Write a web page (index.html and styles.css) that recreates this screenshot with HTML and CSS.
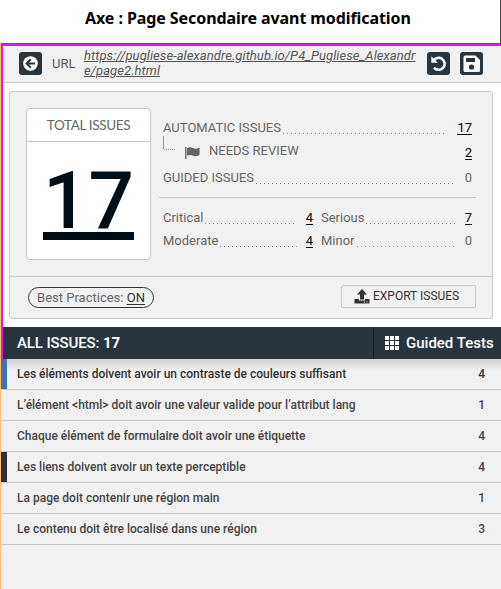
FILE: index.html
```
<!DOCTYPE html>
<html lang="fr">
<head>
<meta charset="utf-8">
<title>Axe : Page Secondaire avant modification</title>
<link rel="stylesheet" href="styles.css">
</head>
<body>
<h1 class="title"><span>Axe : Page Secondaire avant modification</span></h1>
<main class="panel">
  <section class="upper">
    <header class="urlbar">
      <span class="btn back"><svg width="23" height="23" viewBox="0 0 23 23"><circle cx="11.5" cy="11.5" r="7.3" fill="#fff"/><path d="M16 11.5H8M11.8 7.3L7.6 11.5L11.8 15.7" fill="none" stroke="#28353e" stroke-width="2"/></svg></span>
      <span class="label">URL</span>
      <a class="url">https://pugliese-alexandre.github.io/P4_Pugliese_Alexandre/page2.html</a>
      <span class="btn"><svg width="23" height="23" viewBox="0 0 23 23"><path d="M6.3 9.2A6 6 0 1 1 7 15.6" fill="none" stroke="#fff" stroke-width="2.5"/><path d="M4.3 4.3V10.8H10.8Z" fill="#fff"/></svg></span>
      <span class="btn save"><svg width="23" height="23" viewBox="0 0 23 23"><path fill="#fff" fill-rule="evenodd" d="M5 3.5H15.5L20 8V18.5Q20 20 18.5 20H5Q3.5 20 3.5 18.5V5Q3.5 3.5 5 3.5ZM6 6V10H15V6ZM11.5 12.4A2.6 2.6 0 1 0 11.5 17.6A2.6 2.6 0 1 0 11.5 12.4Z"/></svg></span>
    </header>
    <section class="summary">
      <div class="stats">
        <div class="total"><div class="total-head">TOTAL ISSUES</div><div class="total-num"><span>17</span></div></div>
        <div class="counts">
          <div class="line auto"><span>AUTOMATIC ISSUES</span><i></i><b>17</b></div>
          <div class="line review"><svg width="44" height="26" viewBox="0 0 44 26"><path d="M.5 0V13" stroke="#999" fill="none"/><path d="M1 13.5H13" stroke="#999" stroke-dasharray="1 1"/><path d="M22.8 11V23" stroke="#666" stroke-width="1.4"/><path d="M24 12.3Q27 10.5 30 12Q33 13.5 36.6 11.6V19Q33 21 30 19.7Q27 18.2 24 19.8Z" fill="#666"/></svg><span>NEEDS REVIEW</span><b>2</b></div>
          <div class="line guided"><span>GUIDED ISSUES</span><i></i><em>0</em></div>
          <div class="impacts">
            <div class="line"><span class="critical">Critical</span><i></i><b>4</b></div>
            <div class="line"><span>Serious</span><i></i><b>7</b></div>
            <div class="line"><span class="moderate">Moderate</span><i></i><b>4</b></div>
            <div class="line"><span>Minor</span><i></i><em>0</em></div>
          </div>
        </div>
      </div>
      <div class="actions">
        <span class="pill">Best Practices: <u>ON</u></span>
        <span class="export"><svg width="16" height="16" viewBox="0 0 16 16"><path fill="#333" fill-rule="evenodd" d="M8 0L13 5.5H10V10.5H6V5.5H3ZM.5 10H5V11.5H11V10H15.5V14.5H.5ZM10 12.5V13.5H11V12.5ZM12.5 12.5V13.5H13.5V12.5Z"/></svg><span>EXPORT ISSUES</span></span>
      </div>
    </section>
    <header class="issues-head">
      <span class="all">ALL ISSUES: <strong>17</strong></span>
      <span class="guided-tests"><svg width="14" height="14" viewBox="0 0 14 14"><path fill="#fff" d="M0 0h4v4H0zM5 0h4v4H5zM10 0h4v4h-4zM0 5h4v4H0zM5 5h4v4H5zM10 5h4v4h-4zM0 10h4v4H0zM5 10h4v4H5zM10 10h4v4h-4z"/></svg><span>Guided Tests</span></span>
    </header>
  </section>
  <ul class="issues">
    <li class="active"><span>Les éléments doivent avoir un contraste de couleurs suffisant</span><span>4</span></li>
    <li><span>L’élément &lt;html&gt; doit avoir une valeur valide pour l’attribut lang</span><span>1</span></li>
    <li><span>Chaque élément de formulaire doit avoir une étiquette</span><span>4</span></li>
    <li class="marked"><span>Les liens doivent avoir un texte perceptible</span><span>4</span></li>
    <li><span>La page doit contenir une région main</span><span>1</span></li>
    <li><span>Le contenu doit être localisé dans une région</span><span>3</span></li>
  </ul>
</main>
</body>
</html>
```
FILE: styles.css
```
* { box-sizing: border-box; }
body { margin: 0; height: 589px; overflow: hidden; background: #fff; font-family: Roboto, sans-serif; font-size: 13px; color: #666; display: flex; flex-direction: column; }
svg { display: block; flex: none; }
.title { margin: 0; height: 43px; flex: none; padding: 7px 0 0 85px; border-right: 1px solid #444; font: bold 16px/22px "Noto Sans", sans-serif; color: #000; white-space: nowrap; }
.title span { letter-spacing: -0.08px; }
.panel { flex: 1; border-left: 1px solid #fdbf78; background: #f1f1f1; }
.upper { height: 316px; border-left: 2px solid #d51df0; border-top: 1px solid #536066; background: #fff; }
.urlbar { height: 39px; border-top: 2px solid #d51df0; border-bottom: 1px solid #c8c8c8; background: #f1f1f1; display: flex; align-items: flex-start; padding: 6px 18px 0 16px; }
.btn { width: 23px; height: 23px; border-radius: 3px; background: #28353e; flex: none; }
.save { margin-left: 10px; }
.label { font-size: 13px; line-height: 23px; margin-left: 10px; width: 32px; color: #555; }
.url { width: 332px; margin-right: 11px; flex: none; font-size: 13px; letter-spacing: 0.07px; font-style: italic; line-height: 15px; margin-top: -4px; color: #555; text-decoration: underline; word-break: break-all; }
.summary { margin: 8px 8px 8px 6px; height: 228px; border: 1px solid #c8c8c8; border-radius: 3px; background: #f1f1f1; }
.stats { height: 185px; border-bottom: 1px solid #c8c8c8; padding: 16px 16px 0; display: flex; }
.total { width: 125px; height: 152px; background: #fff; border: 1px solid #c8c8c8; border-radius: 4px; }
.total-head { height: 33px; border-bottom: 1px solid #c8c8c8; text-align: center; font: 13.5px/33px Lato, sans-serif; letter-spacing: -0.35px; color: #666; }
.total-num { font-size: 80px; font-weight: 500; line-height: 92px; color: #000f17; display: flex; justify-content: center; padding-top: 13px; }
.total-num span { height: 85px; border-bottom: 8px solid #000f17; }
.counts { flex: 1; margin-left: 8px; }
.line { display: flex; height: 23px; line-height: 18px; padding: 0 4px; white-space: nowrap; }
.line i { flex: 1; height: 15px; margin: 0 9px 0 2px; background: repeating-linear-gradient(90deg, #888 0 1px, transparent 1px 4px) bottom / 100% 1px no-repeat; }
.line b, .line em { font-weight: 400; font-style: normal; text-align: right; }
.line b { color: #000; height: 16px; border-bottom: 1px solid #000; }
.auto { margin-top: 11px; height: 17px; }
.review { height: 33px; }
.review span { margin: 6px auto 0 2px; }
.review b { margin-top: 8px; }
.guided { height: 28px; }
.guided i, .auto i { margin-right: 10px; }
.impacts { border-top: 1px solid #c8c8c8; padding-top: 11px; display: grid; grid-template-columns: 158px 1fr; }
.impacts .line:nth-child(odd) { padding-right: 4px; }
.actions { display: flex; justify-content: space-between; padding: 8px 16px 0 18px; }
.pill { width: 126px; height: 21px; margin-top: 2px; border: 1px solid #333; border-radius: 11px; text-align: center; line-height: 20px; color: #666; white-space: nowrap; }
.pill u { color: #333; text-underline-offset: 2px; }
.export { width: 135px; height: 23px; border: 1px solid #c8c8c8; border-radius: 2px; display: flex; padding: 3px 0 0 12px; gap: 3px; color: #333; font-size: 12px; line-height: 15px; white-space: nowrap; }
.issues-head { height: 32px; background: #28353e; color: #fff; display: flex; justify-content: space-between; font-size: 15px; line-height: 32px; font-weight: 500; }
.all { padding-left: 14px; letter-spacing: -0.12px; }
.all strong { font-weight: 700; }
.guided-tests { width: 128px; border-left: 1px solid #111b21; display: flex; padding-left: 11px; gap: 7px; white-space: nowrap; }
.guided-tests svg { margin-top: 9px; }
.issues { list-style: none; margin: 0; padding: 0; }
.issues li { height: 31px; border-bottom: 1px solid #c8c8c8; display: flex; justify-content: space-between; padding: 0 16px; font-size: 12px; font-weight: 500; line-height: 30px; color: #444; position: relative; }
.issues .active { background: linear-gradient(#cfcfcf, #f1f1f1 12px); color: #333; }
.active::before, .marked::before { content: ""; position: absolute; left: 0; top: 0; width: 6px; height: 30px; background: #3a76ad; }
.marked::before { background: #303030; }
```
